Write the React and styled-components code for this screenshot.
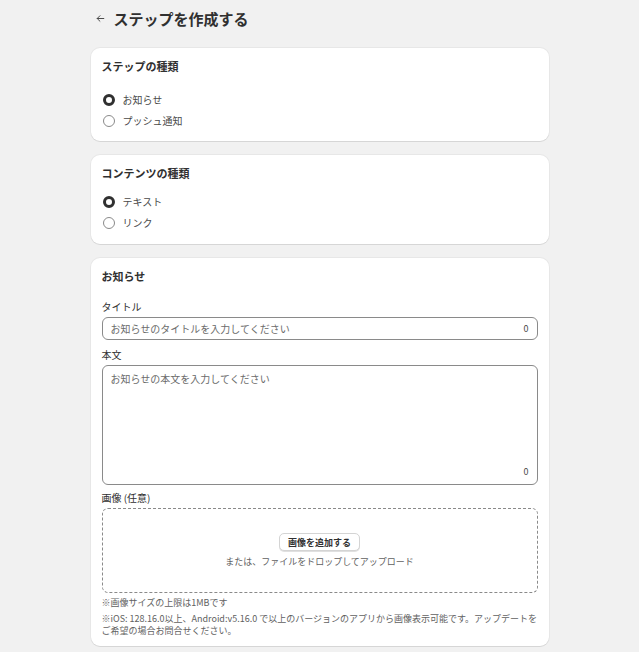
import React from "react";
import styled, { createGlobalStyle } from "styled-components";

const GlobalStyle = createGlobalStyle`
  body {
    margin: 0;
    background: #f1f1f1;
    font-family: "Noto Sans CJK JP", "Noto Sans", sans-serif;
    color: #303030;
  }
`;

const Page = styled.div`
  width: 458px;
  margin: 0 auto;
  padding: 7px 0 8px;
  display: flex;
  flex-direction: column;
  gap: 14px;
`;

const Header = styled.div`
  display: flex;
  align-items: center;
  gap: 8px;
  height: 22px;
  padding-left: 4px;
  margin-bottom: 5px;
`;

const BackArrow = styled.svg`
  width: 11px;
  height: 11px;
  color: #4a4a4a;
`;

const PageTitle = styled.h1`
  margin: 0;
  font-size: 15px;
  font-weight: 700;
  color: #303030;
`;

const Card = styled.section`
  background: #fff;
  border-radius: 9px;
  box-shadow: 0 1px 0 rgba(0, 0, 0, 0.07), 0 0 0 1px rgba(0, 0, 0, 0.04);
  padding: 11px 11px ${(p) => p.$pb || 13}px;
  display: flex;
  flex-direction: column;
`;

const CardTitle = styled.h2`
  margin: 0 0 ${(p) => p.$gap || 14}px;
  font-size: 11px;
  line-height: 14px;
  font-weight: 700;
  color: #303030;
`;

const RadioList = styled.div`
  display: flex;
  flex-direction: column;
  gap: 7px;
`;

const RadioRow = styled.label`
  display: flex;
  align-items: center;
  gap: 8px;
  font-size: 10px;
  line-height: 14px;
  color: #4a4a4a;
`;

const RadioDot = styled.span`
  width: 12px;
  height: 12px;
  box-sizing: border-box;
  border-radius: 50%;
  border: ${(p) => (p.$checked ? "3.5px solid #303030" : "1px solid #8a8a8a")};
  background: #fff;
  margin-left: 1px;
`;

const FieldLabel = styled.div`
  font-size: 10px;
  line-height: 14px;
  color: #303030;
  margin-bottom: 3px;
`;

const Field = styled.div`
  display: flex;
  flex-direction: column;
  margin-bottom: ${(p) => p.$mb || 8}px;
`;

const Input = styled.div`
  height: 23px;
  box-sizing: border-box;
  border: 1px solid #8a8a8a;
  border-radius: 6px;
  display: flex;
  justify-content: space-between;
  align-items: center;
  padding: 0 8px;
  font-size: 10px;
  color: #6b6b6b;
`;

const TextArea = styled(Input)`
  height: 120px;
  flex-direction: column;
  align-items: stretch;
  padding: 5px 8px 6px;
`;

const Counter = styled.span`
  font-size: 9px;
  color: #4a4a4a;
  align-self: ${(p) => (p.$bottom ? "flex-end" : "center")};
`;

const DropZone = styled.div`
  height: 85px;
  box-sizing: border-box;
  border: 1px dashed #8a8a8a;
  border-radius: 6px;
  display: flex;
  flex-direction: column;
  align-items: center;
  justify-content: center;
  gap: 4px;
`;

const Button = styled.button`
  font-family: inherit;
  font-size: 9px;
  font-weight: 700;
  color: #303030;
  background: #fff;
  border: 1px solid #d4d4d4;
  border-radius: 5px;
  box-shadow: 0 1px 0 rgba(0, 0, 0, 0.12);
  height: 18px;
  padding: 0 8px;
`;

const Hint = styled.div`
  font-size: 9px;
  color: #616161;
`;

const Note = styled.p`
  margin: 0;
  font-size: 9px;
  line-height: 12px;
  color: #616161;
  & + & {
    margin-top: 4px;
  }
`;

const Radio = ({ checked, children }) => (
  <RadioRow>
    <RadioDot $checked={checked} />
    {children}
  </RadioRow>
);

export default function App() {
  return (
    <>
      <GlobalStyle />
      <Page>
        <Header>
          <BackArrow viewBox="0 0 20 20" fill="none" stroke="currentColor" strokeWidth="1.8" strokeLinecap="round" strokeLinejoin="round">
            <path d="M16 10H4M9 5l-5 5 5 5" />
          </BackArrow>
          <PageTitle>ステップを作成する</PageTitle>
        </Header>

        <Card>
          <CardTitle $gap={20}>ステップの種類</CardTitle>
          <RadioList>
            <Radio checked>お知らせ</Radio>
            <Radio>プッシュ通知</Radio>
          </RadioList>
        </Card>

        <Card $pb={14}>
          <CardTitle $gap={15}>コンテンツの種類</CardTitle>
          <RadioList>
            <Radio checked>テキスト</Radio>
            <Radio>リンク</Radio>
          </RadioList>
        </Card>

        <Card $pb={9}>
          <CardTitle $gap={17}>お知らせ</CardTitle>
          <Field>
            <FieldLabel>タイトル</FieldLabel>
            <Input>
              <span>お知らせのタイトルを入力してください</span>
              <Counter>0</Counter>
            </Input>
          </Field>
          <Field $mb={6}>
            <FieldLabel>本文</FieldLabel>
            <TextArea>
              <span>お知らせの本文を入力してください</span>
              <Counter $bottom>0</Counter>
            </TextArea>
          </Field>
          <Field $mb={4}>
            <FieldLabel>画像 (任意)</FieldLabel>
            <DropZone>
              <Button>画像を追加する</Button>
              <Hint>または、ファイルをドロップしてアップロード</Hint>
            </DropZone>
          </Field>
          <Note>※画像サイズの上限は1MBです</Note>
          <Note>
            ※iOS: 128.16.0以上、Android:v5.16.0 で以上のバージョンのアプリから画像表示可能です。アップデートをご希望の場合お問合せください。
          </Note>
        </Card>
      </Page>
    </>
  );
}
